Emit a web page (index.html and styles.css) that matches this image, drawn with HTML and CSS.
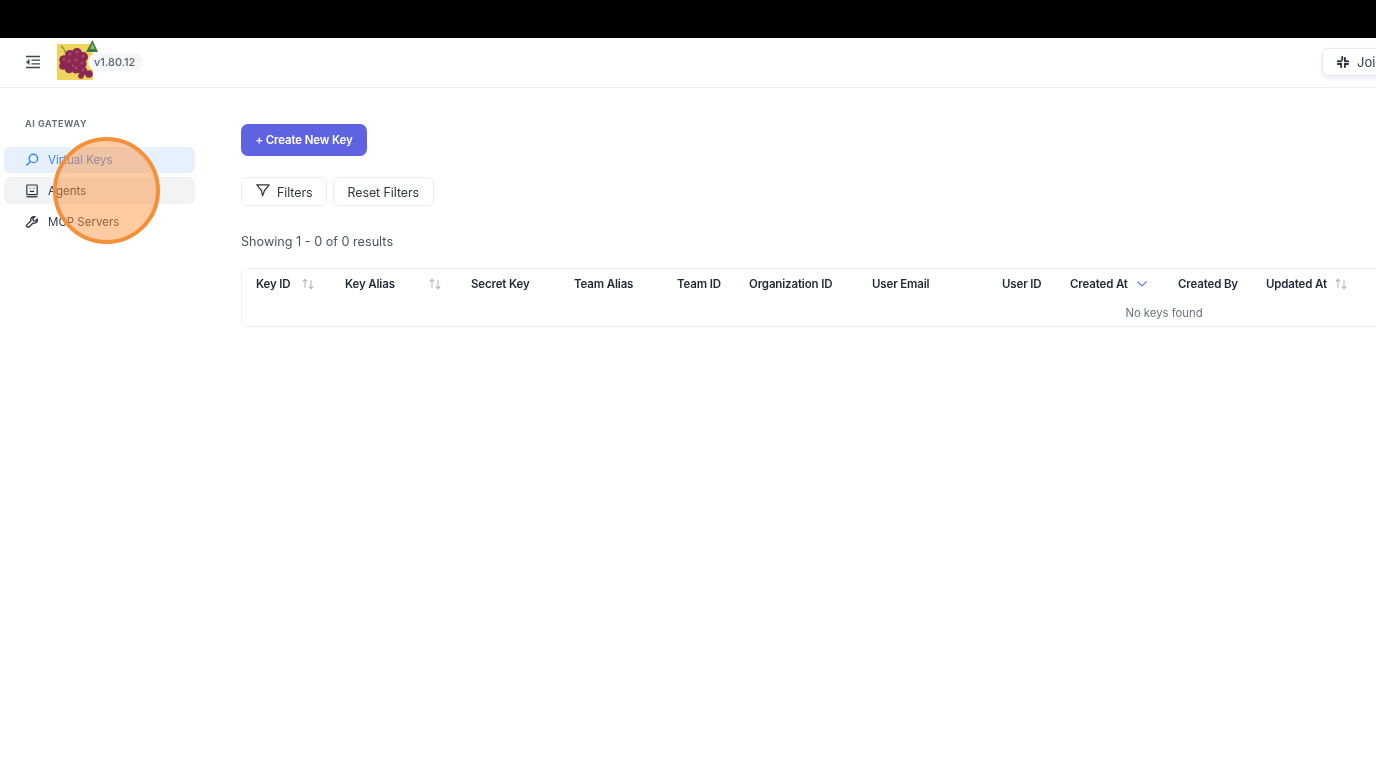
FILE: index.html
```html
<!DOCTYPE html>
<html lang="en">
<head>
<meta charset="utf-8">
<title>Virtual Keys</title>
<link rel="stylesheet" href="styles.css">
</head>
<body>
<div class="topbar"></div>
<div class="app">
  <header class="header">
    <button class="fold" aria-label="Collapse menu">
      <svg width="16" height="14" viewBox="0 0 16 14" fill="none" stroke="#3f4650" stroke-width="1.300"><path d="M1 1.500h14M6.500 5.200H15M6.500 8.800H15M1 12.500h14"/><path d="M4.200 4.500 1.400 7l2.800 2.500z" fill="#3f4650" stroke-width=".6"/></svg>
    </button>
    <div class="logo">
      <svg class="logo-art" width="44" height="44" viewBox="0 0 44 44">
        <rect x="1" y="8" width="36" height="36" fill="#f1d45c"/>
        <path d="M5 10q4 3 6 10" stroke="#7d9a3c" stroke-width="1.400" fill="none"/>
        <g fill="#8a2853">
          <circle cx="8" cy="24" r="4.800"/><circle cx="14" cy="19" r="5"/><circle cx="21" cy="17" r="5"/><circle cx="27" cy="21" r="5"/>
          <circle cx="7" cy="30" r="3.800"/><circle cx="13" cy="26" r="5"/><circle cx="20" cy="25" r="5"/><circle cx="26" cy="28" r="4.600"/>
          <circle cx="13" cy="33" r="4.200"/><circle cx="20" cy="33" r="4.600"/><circle cx="27" cy="35" r="4.400"/><circle cx="33" cy="38" r="3.800"/><circle cx="25" cy="40" r="2.800"/>
        </g>
        <g fill="#a83f6c"><circle cx="14" cy="18" r="1.800"/><circle cx="21" cy="16" r="1.800"/><circle cx="27" cy="20" r="1.700"/><circle cx="13" cy="25" r="1.800"/><circle cx="20" cy="24" r="1.800"/><circle cx="26" cy="27" r="1.600"/><circle cx="20" cy="32" r="1.600"/><circle cx="27" cy="34" r="1.500"/><circle cx="8" cy="23" r="1.500"/></g>
        <path d="M36.500 4 42 16H30z" fill="#3f7d3e"/>
        <path d="M36.500 7.500 39 13h-5z" fill="#8fb878"/>
      </svg>
      <span class="version">v1.80.12</span>
    </div>
    <button class="join">
      <svg width="12" height="12" viewBox="0 0 12 12" fill="#2f3640"><rect x="0" y="4.300" width="5" height="1.900" rx=".9"/><rect x="4.300" y="0" width="1.900" height="5" rx=".9"/><rect x="7" y="1" width="1.900" height="5" rx=".9"/><rect x="7" y="4.300" width="5" height="1.900" rx=".9"/><rect x="7" y="7" width="5" height="1.900" rx=".9"/><rect x="7" y="7" width="1.900" height="5" rx=".9"/><rect x="3.200" y="7" width="1.900" height="5" rx=".9"/><rect x="0" y="7" width="5" height="1.900" rx=".9"/></svg>
      <span>Join</span>
    </button>
  </header>
  <div class="body">
    <aside class="sidebar">
      <div class="side-label">AI GATEWAY</div>
      <nav class="menu">
        <a class="item item-active">
          <svg width="14" height="14" viewBox="0 0 14 14" fill="none" stroke="#3b82f6" stroke-width="1.400"><circle cx="8.400" cy="5.400" r="4.200"/><path d="M5.400 8.400 1.300 12.600"/></svg>
          <span>Virtual Keys</span>
        </a>
        <a class="item item-hover">
          <svg width="14" height="14" viewBox="0 0 14 14" fill="none" stroke="#2f3640" stroke-width="1.200"><rect x="1.800" y="1" width="10.400" height="9.600" rx=".6"/><path d="M1.500 12.800h11" stroke-width="1.300"/><path d="M4.600 4.200h.8M8.600 4.200h.8" stroke-width="1.300"/><path d="M4.800 7.400h4.400"/></svg>
          <span>Agents</span>
        </a>
        <a class="item">
          <svg width="14" height="14" viewBox="-1 -1 16 16" fill="none" stroke="#2f3640" stroke-width="1.500"><path d="M13 3.600 10.600 6 8.300 5.500 7.900 3.300 10.300 1A3.600 3.600 0 0 0 5.800 5.500L1.300 10a1.700 1.700 0 0 0 2.500 2.500l4.500-4.400A3.600 3.600 0 0 0 13 3.600z" stroke-linejoin="round"/></svg>
          <span>MCP Servers</span>
        </a>
      </nav>
    </aside>
    <main class="main">
      <button class="create">+ Create New Key</button>
      <div class="filters">
        <button class="btn btn-icon">
          <svg width="14" height="13" viewBox="0 0 14 13" fill="none" stroke="#2f3640" stroke-width="1.200" stroke-linejoin="round"><path d="M.8.800h12.400L8.500 6.500 6.500 12 5.500 6.500z"/></svg>
          <span>Filters</span>
        </button>
        <button class="btn">Reset Filters</button>
      </div>
      <p class="results">Showing 1 - 0 of 0 results</p>
      <div class="table-box">
        <table class="keys">
          <colgroup>
            <col class="c1"><col class="c2"><col class="c3"><col class="c3"><col class="c4"><col class="c5"><col class="c6"><col class="c7"><col class="c8"><col class="c9"><col class="c10"><col class="c11">
          </colgroup>
          <thead>
            <tr>
              <th><span class="th">Key ID<svg class="sort sort-a" width="14" height="12" viewBox="0 0 14 12" fill="none" stroke="#b4b9c1" stroke-width="1.100"><path d="M4 10V1.500M1.800 3.600 4 1.300l2.200 2.300M10 2v8.500M7.800 8.400l2.200 2.300 2.200-2.300"/></svg></span></th>
              <th><span class="th">Key Alias<svg class="sort sort-b" width="14" height="12" viewBox="0 0 14 12" fill="none" stroke="#b4b9c1" stroke-width="1.100"><path d="M4 10V1.500M1.800 3.600 4 1.300l2.200 2.300M10 2v8.500M7.800 8.400l2.200 2.300 2.200-2.300"/></svg></span></th>
              <th>Secret Key</th>
              <th>Team Alias</th>
              <th>Team ID</th>
              <th>Organization ID</th>
              <th>User Email</th>
              <th>User ID</th>
              <th><span class="th">Created At<svg class="sort sort-c" width="12" height="8" viewBox="0 0 12 8" fill="none" stroke="#5b84d6" stroke-width="1.200"><path d="M1.500 1.500 6 6l4.500-4.500"/></svg></span></th>
              <th>Created By</th>
              <th><span class="th">Updated At<svg class="sort sort-d" width="14" height="12" viewBox="0 0 14 12" fill="none" stroke="#b4b9c1" stroke-width="1.100"><path d="M4 10V1.500M1.800 3.600 4 1.300l2.200 2.300M10 2v8.500M7.800 8.400l2.200 2.300 2.200-2.300"/></svg></span></th>
              <th></th>
            </tr>
          </thead>
          <tbody>
            <tr><td colspan="12" class="empty">No keys found</td></tr>
          </tbody>
        </table>
      </div>
    </main>
  </div>
</div>
<div class="click-ring"></div>
</body>
</html>
```
FILE: styles.css
```css
* { box-sizing: border-box; }
html, body { margin: 0; height: 100%; }
body {
  width: 1376px;
  height: 769px;
  overflow: hidden;
  background: #fff;
  color: #1f2937;
  font-family: Inter, "Liberation Sans", sans-serif;
  position: relative;
}
button { font-family: inherit; cursor: pointer; }
.topbar { height: 38px; background: #000; }
.app { filter: blur(0.35px); }
.header {
  height: 50px;
  display: flex;
  align-items: center;
  border-bottom: 1px solid #f0f1f3;
  padding-left: 25px;
  white-space: nowrap;
}
.fold { width: 16px; height: 14px; padding: 0; border: 0; background: none; display: flex; margin: -2px 15px 0 0; }
.logo { position: relative; width: 101px; height: 44px; margin-top: -10px; flex: none; }
.logo-art { display: block; position: absolute; left: 0; top: 0; }
.version {
  position: absolute;
  left: 32px;
  top: 17px;
  height: 18px;
  padding: 0 8px 0 6px;
  background: #f4f6f8;
  border-radius: 9px;
  font-size: 11px;
  line-height: 18px;
  font-weight: 500;
  color: #5c6470;
}
.join {
  flex: none;
  margin: -2px 0 0 1165px;
  height: 28px;
  width: 90px;
  display: flex;
  align-items: center;
  gap: 8px;
  padding: 0 0 0 14px;
  background: #fff;
  border: 1px solid #e8eaee;
  border-radius: 6px;
  box-shadow: 0 2px 4px rgba(99, 102, 241, .14);
  font-size: 13px;
  color: #374151;
}
.body { display: flex; }
.sidebar { width: 200px; flex: none; padding: 29px 5px 0 4px; }
.side-label {
  padding-left: 21px;
  font-size: 9px;
  line-height: 13px;
  font-weight: 700;
  letter-spacing: .55px;
  color: #6b7280;
  margin-bottom: 17px;
}
.menu { display: flex; flex-direction: column; gap: 4px; }
.item {
  height: 27px;
  display: flex;
  align-items: center;
  gap: 9px;
  padding-left: 21px;
  border-radius: 6px;
  font-size: 11.500px;
  color: #374151;
}
.item-active { height: 26px; background: #e6f1fd; color: #3b82f6; }
.item-hover { background: #f1f3f5; }
.main { flex: none; width: 1176px; padding: 36px 0 0 41px; overflow: hidden; }
.create {
  display: block;
  width: 126px;
  height: 32px;
  padding: 0;
  border: 0;
  border-radius: 7px;
  background: #5f63e2;
  color: #fff;
  font-size: 11.500px;
  font-weight: 600;
  letter-spacing: -.15px;
}
.filters { display: flex; gap: 6px; margin-top: 21px; }
.btn {
  height: 29px;
  padding: 1px 14px 0;
  display: flex;
  align-items: center;
  gap: 7px;
  background: #fff;
  border: 1px solid #ebedf0;
  border-radius: 6px;
  font-size: 12.400px;
  letter-spacing: -.05px;
  color: #2f3640;
}
.btn-icon { padding-right: 13px; }
.btn-icon svg { margin-top: -3px; }
.results { margin: 27px 0 0; font-size: 12.650px; line-height: 18px; color: #4b5563; }
.table-box {
  width: 1846px;
  margin-top: 17px;
  border: 1px solid #eceef1;
  border-radius: 8px;
  overflow: hidden;
}
.keys { width: 100%; table-layout: fixed; border-collapse: collapse; }
.keys th {
  height: 29px;
  padding: 0 0 0 14px;
  text-align: left;
  font-size: 11.500px;
  font-weight: 600;
  letter-spacing: -.15px;
  color: #1f2937;
  white-space: nowrap;
}
.th { display: inline-flex; align-items: center; }
.sort { flex: none; }
.sort-a { margin-left: 11px; }
.sort-b { margin-left: 33px; }
.sort-c { margin-left: 8px; }
.sort-d { margin-left: 7px; }
.c1 { width: 89px; }
.c2 { width: 126px; }
.c3 { width: 103px; }
.c4 { width: 72px; }
.c5 { width: 123px; }
.c6 { width: 130px; }
.c7 { width: 68px; }
.c8 { width: 108px; }
.c9 { width: 88px; }
.c10 { width: 130px; }
.empty {
  height: 28px;
  padding: 1px 0 0;
  text-align: center;
  font-size: 11.300px;
  color: #6b7280;
}
.click-ring {
  position: absolute;
  left: 53px;
  top: 137px;
  width: 107px;
  height: 107px;
  border-radius: 50%;
  border: 4px solid #f5903a;
  background: rgba(252, 140, 50, .45);
  filter: blur(0.35px);
}
```
